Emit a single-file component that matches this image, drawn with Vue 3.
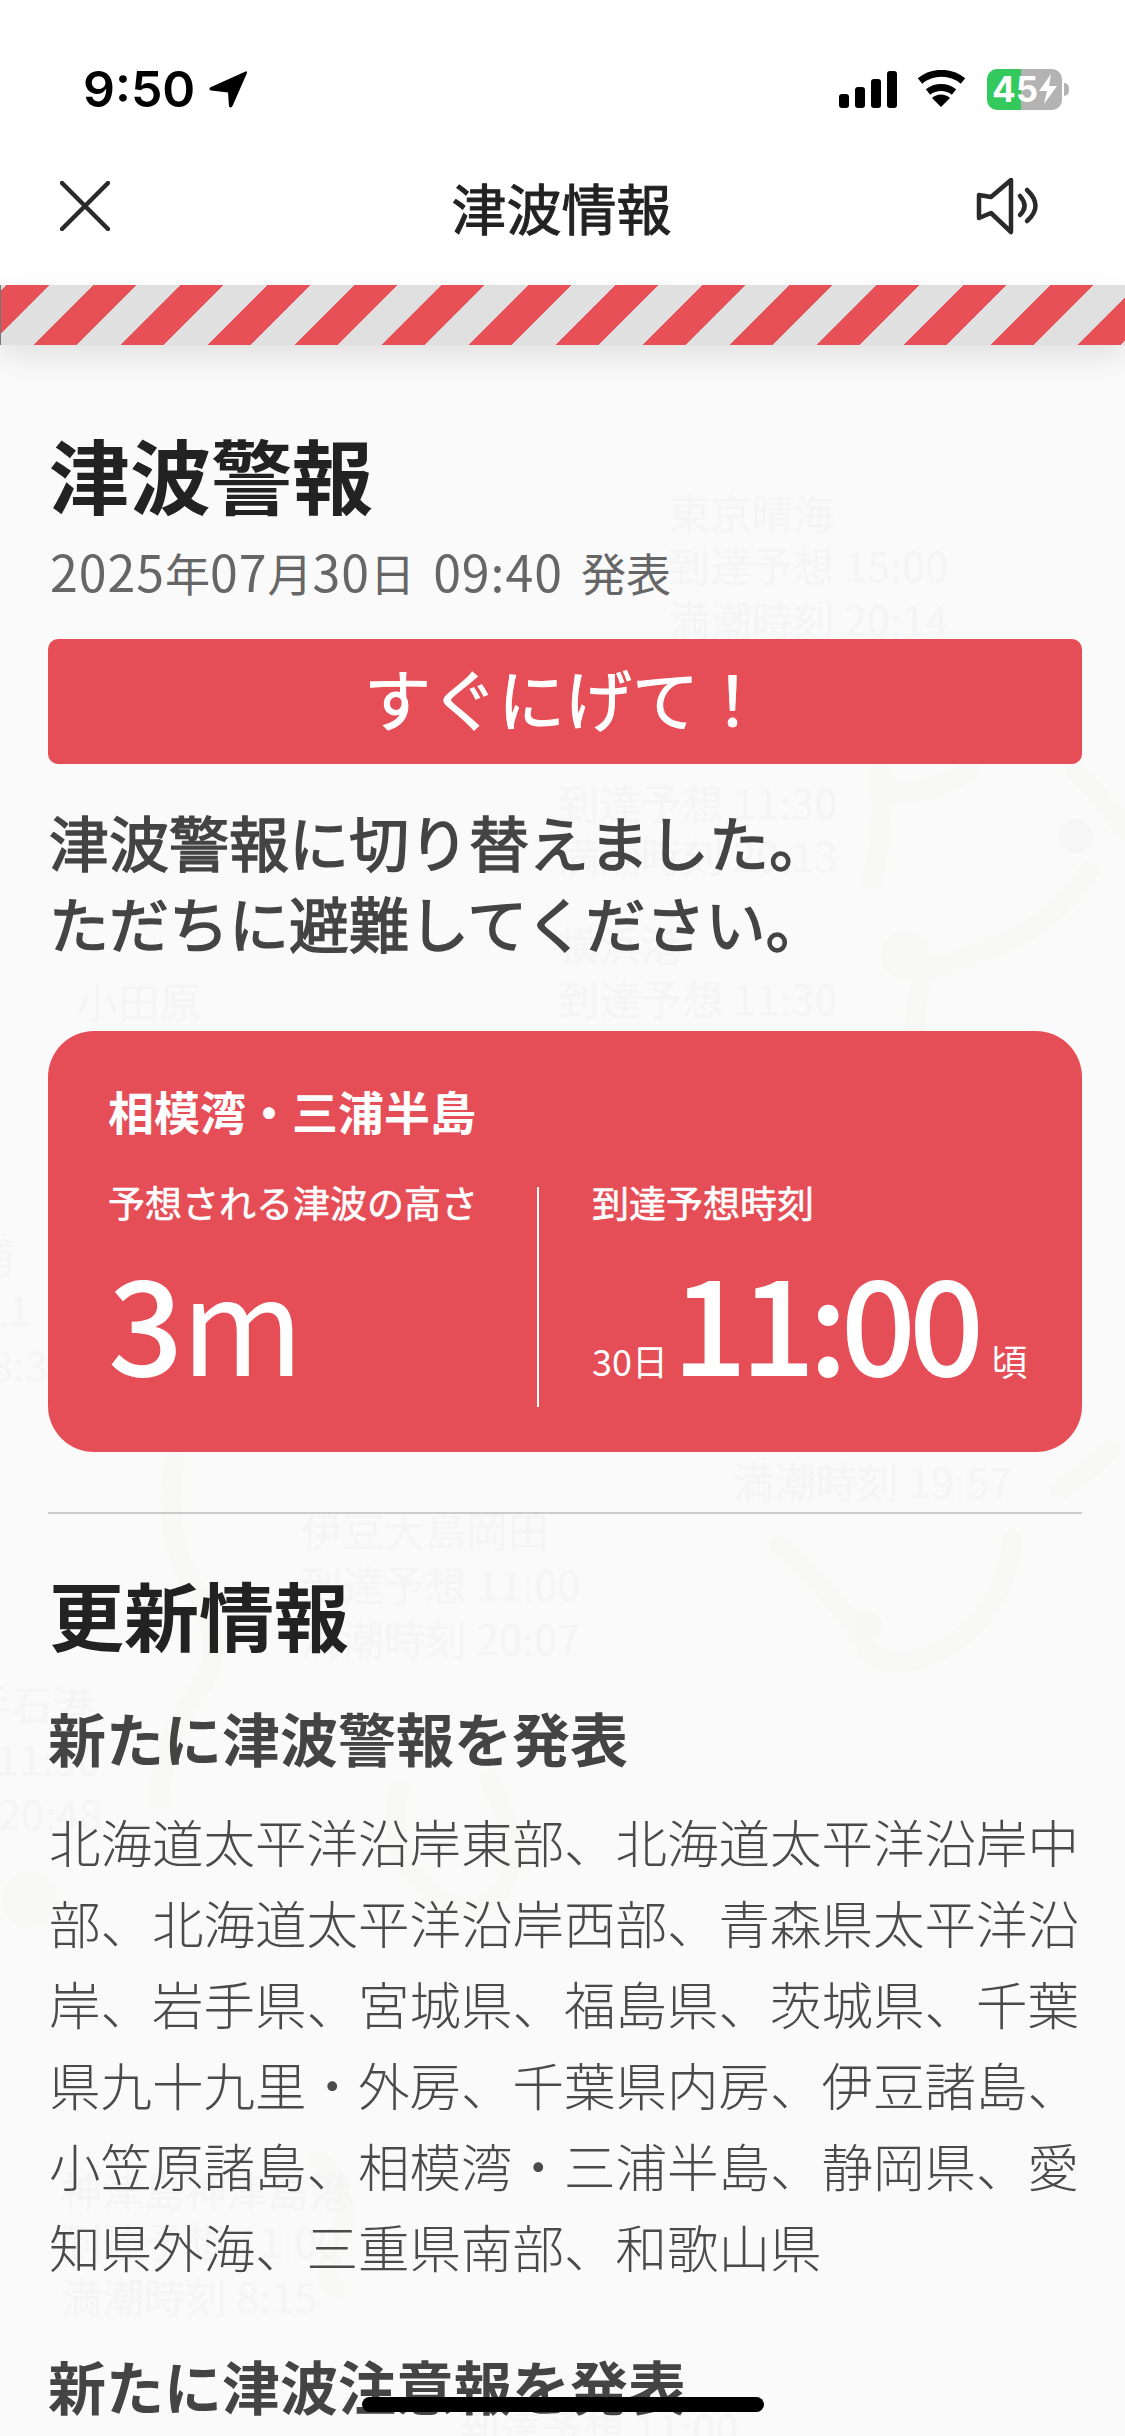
<script setup>
const mapLabels = [
  { text: '東京晴海', x: 669, y: 484 },
  { text: '到達予想 15:00', x: 669, y: 537 },
  { text: '満潮時刻 20:14', x: 669, y: 591 },
  { text: '到達予想 11:30', x: 558, y: 774 },
  { text: '満潮時刻 20:13', x: 558, y: 827 },
  { text: '横浜港', x: 558, y: 916 },
  { text: '到達予想 11:30', x: 558, y: 970 },
  { text: '小田原', x: 77, y: 973 },
  { text: '浦', x: -27, y: 1228 },
  { text: '11', x: -15, y: 1281 },
  { text: '8:30', x: -10, y: 1336 },
  { text: '満潮時刻 19:57', x: 733, y: 1453 },
  { text: '伊豆大島岡田', x: 301, y: 1502 },
  { text: '到達予想 11:00', x: 301, y: 1556 },
  { text: '満潮時刻 20:07', x: 301, y: 1610 },
  { text: '手石港', x: -30, y: 1676 },
  { text: '11:30', x: -4, y: 1730 },
  { text: '20:48', x: -2, y: 1785 },
  { text: '神津島神津島港', x: 61, y: 2162 },
  { text: '到達予想 11:00', x: 61, y: 2213 },
  { text: '満潮時刻 8:15', x: 61, y: 2268 },
  { text: '到達予想 11:00', x: 459, y: 2400 },
]

const bodyText = '北海道太平洋沿岸東部、北海道太平洋沿岸中部、北海道太平洋沿岸西部、青森県太平洋沿岸、岩手県、宮城県、福島県、茨城県、千葉県九十九里・外房、千葉県内房、伊豆諸島、小笠原諸島、相模湾・三浦半島、静岡県、愛知県外海、三重県南部、和歌山県'
</script>

<template>
  <div class="page">
    <div class="map">
      <svg class="coast" width="1125" height="2436" viewBox="0 0 1125 2436" fill="none">
        <g stroke="#f8f8f6" stroke-width="20" stroke-linecap="round" stroke-linejoin="round">
          <path d="M880 775 Q885 830 872 880" />
          <path d="M880 790 Q925 800 970 770" />
          <path d="M1075 770 Q1105 800 1125 830" />
          <path d="M1090 870 Q1050 930 985 950 Q950 965 920 970" />
          <path d="M925 965 Q915 1000 915 1028" />
          <path d="M175 1460 Q160 1530 195 1590 Q225 1640 205 1680 Q160 1740 160 1800" />
          <path d="M400 1790 Q380 1850 440 1900 Q500 1930 515 1850 Q505 1810 490 1780" />
          <path d="M780 1545 Q850 1610 870 1655 Q920 1680 980 1620 Q1010 1580 1012 1540" />
          <path d="M320 2160 Q355 2200 340 2240 Q320 2270 335 2290" />
          <path d="M1060 1490 Q1090 1470 1110 1450" />
        </g>
        <circle cx="1076" cy="836" r="17" fill="#f6f6f6" />
        <circle cx="905" cy="955" r="24" fill="#f8f8f6" />
        <circle cx="868" cy="1625" r="14" fill="#f7f7f5" />
        <circle cx="30" cy="1900" r="28" fill="#f8f8f6" />
      </svg>
      <span
        v-for="label in mapLabels"
        :key="label.text + label.y"
        class="map-label"
        :style="{ left: label.x + 'px', top: label.y + 'px' }"
      >{{ label.text }}</span>
    </div>

    <header class="topbar">
      <div class="status">
        <div class="clock">
          <span>9:50</span>
          <svg class="arrow" width="40" height="38" viewBox="0 0 40 38">
            <path d="M37.5 1.5 L2 17.5 Q0.5 20 3 20.5 L20 22.5 L21 36.5 Q23 38.5 24.5 36 L39 3 Q39 0.5 37.5 1.5 Z" fill="#000" />
          </svg>
        </div>
        <div class="status-right">
          <svg width="58" height="37" viewBox="0 0 58 37" fill="#000">
            <rect x="0" y="23" width="10" height="14" rx="3" />
            <rect x="16" y="16" width="10" height="21" rx="3" />
            <rect x="32" y="8" width="10" height="29" rx="3" />
            <rect x="48" y="0" width="10" height="37" rx="3" />
          </svg>
          <svg width="52" height="38" viewBox="917 70 52 38" fill="none">
            <path d="M921 81 A34 34 0 0 1 964 81" stroke="#000" stroke-width="7" />
            <path d="M929 92 A21 21 0 0 1 955 92" stroke="#000" stroke-width="7" />
            <path d="M942 107 L933 98 A13 13 0 0 1 951 98 Z" fill="#000" />
          </svg>
          <div class="battery">
            <div class="battery-body">
              <span>45</span>
              <svg width="18" height="30" viewBox="0 0 18 30">
                <path d="M12 0 L0 17 L8 17 L5 30 L18 12 L10 12 Z" fill="#fff" />
              </svg>
            </div>
            <div class="battery-nub"></div>
          </div>
        </div>
      </div>
      <nav class="nav">
        <svg class="close" width="50" height="50" viewBox="0 0 50 50">
          <path d="M2 2 L48 48 M48 2 L2 48" stroke="#2a2a2a" stroke-width="4.5" stroke-linecap="round" />
        </svg>
        <div class="nav-title">津波情報</div>
        <svg class="speaker" width="62" height="58" viewBox="977 179 62 58" fill="none" stroke="#2a2a2a" stroke-width="4.5" stroke-linecap="round" stroke-linejoin="round">
          <path d="M1012 182 L992 199 L980 197 L980 220 L992 215 L1012 234 Z" />
          <path d="M1021 198 Q1030 208 1021 217" />
          <path d="M1028 192 Q1045 208 1028 223" />
        </svg>
      </nav>
    </header>
    <div class="stripe"></div>

    <main class="content">
      <h1 class="title">津波警報</h1>
      <p class="date"><span class="num">2025</span>年<span class="num">07</span>月<span class="num">30</span>日 <span class="num">09:40</span> 発表</p>
      <div class="escape">すぐにげて！</div>
      <p class="lead">津波警報に切り替えました。<br>ただちに避難してください。</p>

      <section class="card">
        <div class="card-area">相模湾・三浦半島</div>
        <div class="card-cols">
          <div class="col col-height">
            <div class="col-label">予想される津波の高さ</div>
            <div class="col-value height-value">3<span class="unit">m</span></div>
          </div>
          <div class="col col-time">
            <div class="col-label">到達予想時刻</div>
            <div class="col-value time-value">
              <span class="small">30日</span>
              <span class="time">11:00</span>
              <span class="small">頃</span>
            </div>
          </div>
        </div>
      </section>

      <hr class="rule">

      <h2 class="updates">更新情報</h2>
      <h3 class="sub">新たに津波警報を発表</h3>
      <p class="body">{{ bodyText }}</p>
      <h3 class="sub sub-next">新たに津波注意報を発表</h3>
    </main>

    <div class="home-bar"></div>
  </div>
</template>

<style>
html,
body {
  margin: 0;
  background: #fafafa;
}
</style>

<style scoped>
.page {
  position: relative;
  width: 1125px;
  height: 2436px;
  overflow: hidden;
  background: #fafafa;
  font-family: "Noto Sans CJK JP", "Noto Sans", sans-serif;
  color: #222;
}

.map {
  position: absolute;
  inset: 0;
}

.coast {
  position: absolute;
  left: 0;
  top: 0;
}

.map-label {
  position: absolute;
  font-size: 41px;
  line-height: 54px;
  letter-spacing: 0.4px;
  color: #f5f5f5;
  white-space: nowrap;
}

.topbar {
  position: relative;
  z-index: 2;
  height: 285px;
  background: #fff;
}

.status {
  display: flex;
  justify-content: space-between;
  align-items: center;
  height: 50px;
  padding: 64px 56px 0 83px;
}

.clock {
  display: flex;
  align-items: center;
  gap: 13px;
  font-family: Inter, "Liberation Sans", sans-serif;
  font-size: 50px;
  font-weight: 600;
  color: #000;
}

.status-right {
  display: flex;
  align-items: center;
  gap: 19px;
}

.battery {
  display: flex;
  align-items: center;
  gap: 2px;
}

.battery-body {
  display: flex;
  align-items: center;
  justify-content: center;
  gap: 1px;
  width: 75px;
  height: 41px;
  border-radius: 10px;
  background: linear-gradient(90deg, #34c95c 0 34px, #b3b3b3 34px);
  font-family: Inter, "Liberation Sans", sans-serif;
  font-size: 35px;
  font-weight: 700;
  color: #fff;
}

.battery-nub {
  width: 5px;
  height: 13px;
  border-radius: 0 5px 5px 0;
  background: #b3b3b3;
}

.nav {
  display: grid;
  grid-template-columns: 1fr auto 1fr;
  align-items: center;
  height: 100px;
  margin-top: 42px;
  padding: 0 62px 0 60px;
}

.nav-title {
  font-size: 55px;
  font-weight: 400;
  line-height: 100px;
  color: #222;
  -webkit-text-stroke: 1px #222;
}

.speaker {
  justify-self: end;
  margin-right: 25px;
}

.stripe {
  position: relative;
  z-index: 2;
  height: 60px;
  box-sizing: border-box;
  border-left: 1px solid #777;
  background: repeating-linear-gradient(135deg, #e0e0e0 0 4.2px, #e85058 4.2px 34.3px, #e0e0e0 34.3px 61.5px);
  box-shadow: 0 12px 30px rgba(0, 0, 0, 0.1);
}

.content {
  position: relative;
  z-index: 1;
  padding: 83px 43px 0 48px;
}

.title {
  margin: 0 0 25px 1px;
  font-size: 81px;
  font-weight: 700;
  line-height: 90px;
}

.date {
  margin: 0 0 36px 2px;
  font-size: 45px;
  line-height: 60px;
  word-spacing: 8px;
  color: #666;
}

.num {
  font-size: 50px;
  line-height: 1;
  letter-spacing: 1px;
}

.escape {
  height: 125px;
  border-radius: 10px;
  background: #e64e57;
  font-size: 67px;
  font-weight: 400;
  line-height: 116px;
  text-align: center;
  color: #fff;
  -webkit-text-stroke: 1px #fff;
}

.lead {
  margin: 36px 0 69px 1px;
  font-size: 60px;
  font-weight: 400;
  line-height: 81px;
  color: #444;
  -webkit-text-stroke: 1.5px #444;
}

.card {
  box-sizing: border-box;
  height: 421px;
  padding: 49px 60px 0;
  border-radius: 46px;
  background: #e64e57;
  color: #fff;
}

.card-area {
  font-size: 46px;
  font-weight: 700;
  line-height: 60px;
}

.card-cols {
  display: grid;
  grid-template-columns: 429px 1fr;
  height: 220px;
  margin-top: 47px;
}

.col-time {
  padding-left: 53px;
  border-left: 2px solid #fff;
}

.col-label {
  margin-top: -3px;
  font-size: 37px;
  font-weight: 400;
  line-height: 37px;
  -webkit-text-stroke: 0.6px #fff;
}

.col-value {
  display: flex;
  align-items: baseline;
  margin-top: 32px;
  font-size: 132px;
  font-weight: 500;
  line-height: 132px;
}

.unit {
  margin-left: -2px;
  font-weight: 400;
}

.time {
  margin: 0 14px 0 4px;
  letter-spacing: -7px;
}

.small {
  flex: none;
  font-size: 36px;
  font-weight: 400;
  line-height: 36px;
  white-space: nowrap;
}

.rule {
  height: 2px;
  margin: 60px 0 55px;
  border: 0;
  background: #ccc;
}

.updates {
  margin: 0 0 43px 1px;
  font-size: 75px;
  font-weight: 700;
  line-height: 90px;
}

.sub {
  margin: 0;
  font-size: 58px;
  font-weight: 700;
  line-height: 70px;
  color: #444;
}

.body {
  margin: 28px 0 0 1px;
  font-size: 51.5px;
  font-weight: 300;
  line-height: 81px;
  color: #4a4a4a;
}

.sub-next {
  margin-top: 64px;
}

.home-bar {
  position: absolute;
  z-index: 3;
  left: 362px;
  top: 2397px;
  width: 402px;
  height: 15px;
  border-radius: 8px;
  background: #000;
}
</style>
